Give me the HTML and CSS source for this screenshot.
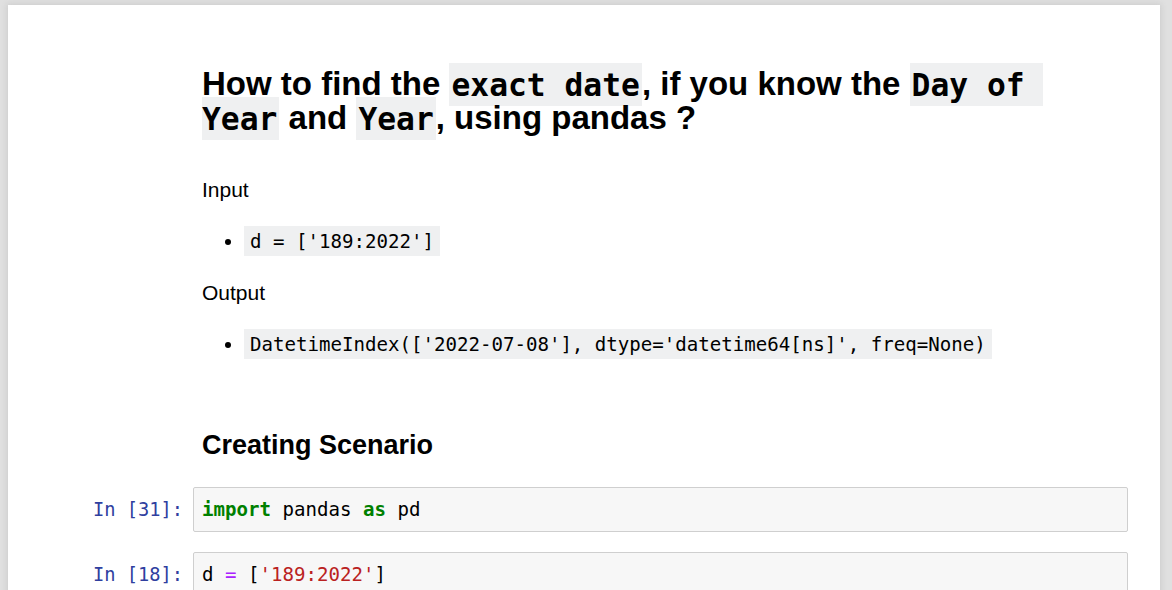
FILE: index.html
```html
<!DOCTYPE html>
<html>
<head>
<meta charset="utf-8">
<link rel="stylesheet" href="styles.css">
</head>
<body>
<div class="page">
  <div class="cell md first">
    <div class="prompt"></div>
    <div class="md-body">
      <h2 class="title">How to find the <code class="hcode">exact date</code>, if you know the <code class="hcode">Day of Year</code> and <code class="hcode">Year</code>, using pandas ?</h2>
      <p class="para">Input</p>
      <ul class="list"><li><code class="icode">d = ['189:2022']</code></li></ul>
      <p class="para">Output</p>
      <ul class="list"><li><code class="icode">DatetimeIndex(['2022-07-08'], dtype='datetime64[ns]', freq=None)</code></li></ul>
    </div>
  </div>
  <div class="cell md second">
    <div class="prompt"></div>
    <div class="md-body">
      <h3 class="subtitle">Creating Scenario</h3>
    </div>
  </div>
  <div class="cell code c1">
    <div class="prompt in">In&nbsp;[31]:</div>
    <div class="input-area"><span class="kw">import</span> pandas <span class="kw">as</span> pd</div>
  </div>
  <div class="cell code c2">
    <div class="prompt in">In&nbsp;[18]:</div>
    <div class="input-area">d <span class="op">=</span> [<span class="str">'189:2022'</span>]</div>
  </div>
</div>
</body>
</html>
```
FILE: styles.css
```css
html, body {
  margin: 0;
  padding: 0;
  background: #e0e0e0;
  overflow: hidden;
}
.page {
  margin: 5px 0 0 8px;
  width: 1152px;
  min-height: 700px;
  background: #fff;
  box-shadow: 0 0 6px 1px rgba(87, 87, 87, 0.15);
  padding: 62px 32px 0 30px;
  box-sizing: border-box;
  display: flex;
  flex-direction: column;
  font-family: "Liberation Sans", Arial, sans-serif;
  color: #000;
}
.cell {
  display: grid;
  grid-template-columns: 155px 1fr;
}
.md-body {
  padding: 0 18px 0 9px;
}
.title {
  margin: 0 0 39.5px;
  font-size: 33px;
  line-height: 34px;
  font-weight: bold;
}
.hcode {
  font-family: "DejaVu Sans Mono", monospace;
  font-size: 31.3px;
  background: #eff0f1;
  padding: 3.5px 2px;
  white-space: pre-wrap;
}
.title .hcode {
  font-weight: 600;
}
.para {
  margin: 0;
  font-size: 21px;
  line-height: 30px;
}
.list {
  margin: 21px 0;
  padding-left: 42px;
  font-size: 21px;
  line-height: 30px;
}
.list:last-child {
  margin-bottom: 0;
}
.icode {
  font-family: "DejaVu Sans Mono", monospace;
  font-size: 19.1px;
  background: #eff0f1;
  padding: 3.5px 6px;
}
.second {
  margin-top: 70px;
}
.subtitle {
  margin: 0;
  font-size: 27px;
  line-height: 30px;
  font-weight: bold;
}
.c1 {
  margin-top: 27px;
}
.c2 {
  margin-top: 20px;
}
.prompt {
  font-family: "DejaVu Sans Mono", monospace;
  font-size: 18.7px;
  color: #303f9f;
  text-align: right;
  padding: 9px 10px 0 0;
  line-height: 27px;
}
.input-area {
  border: 1px solid #cfcfcf;
  border-radius: 2px;
  background: #f7f7f7;
  padding: 8px 8px;
  font-family: "DejaVu Sans Mono", monospace;
  font-size: 19.1px;
  line-height: 27px;
  white-space: pre;
}
.kw {
  color: #008000;
  font-weight: bold;
}
.op {
  color: #aa22ff;
}
.str {
  color: #ba2121;
}
```
